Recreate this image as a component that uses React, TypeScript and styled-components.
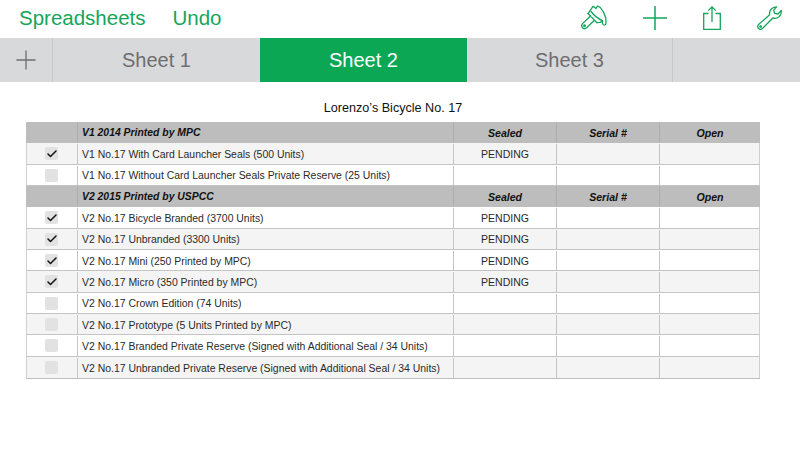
import React from "react";
import styled, { createGlobalStyle } from "styled-components";
import { Check } from "lucide-react";

const GREEN = "#16a55a";

const GlobalStyle = createGlobalStyle`
  html, body {
    margin: 0;
    padding: 0;
    background: #ffffff;
  }
  body {
    width: 800px;
    height: 450px;
    overflow: hidden;
    font-family: "Liberation Sans", Arial, sans-serif;
  }
`;

type Row = { name: string; checked: boolean; sealed?: string };

const section1: Row[] = [
  { name: "V1 No.17 With Card Launcher Seals (500 Units)", checked: true, sealed: "PENDING" },
  { name: "V1 No.17 Without Card Launcher Seals Private Reserve (25 Units)", checked: false },
];

const section2: Row[] = [
  { name: "V2 No.17 Bicycle Branded (3700 Units)", checked: true, sealed: "PENDING" },
  { name: "V2 No.17 Unbranded (3300 Units)", checked: true, sealed: "PENDING" },
  { name: "V2 No.17 Mini (250 Printed by MPC)", checked: true, sealed: "PENDING" },
  { name: "V2 No.17 Micro (350 Printed by MPC)", checked: true, sealed: "PENDING" },
  { name: "V2 No.17 Crown Edition (74 Units)", checked: false },
  { name: "V2 No.17 Prototype (5 Units Printed by MPC)", checked: false },
  { name: "V2 No.17 Branded Private Reserve (Signed with Additional Seal / 34 Units)", checked: false },
  { name: "V2 No.17 Unbranded Private Reserve (Signed with Additional Seal / 34 Units)", checked: false },
];

const BrushIcon = () => (
  <svg width="26" height="25" viewBox="0 0 26 25" fill="none" stroke={GREEN} strokeWidth="1.3" strokeLinejoin="round" strokeLinecap="round">
    {/* handle */}
    <path d="M9.5 11 L1.6 18.6 C0.4 19.8 0.6 21.6 1.6 22.7 C2.8 23.9 4.4 23.9 5.6 22.8 L13.5 15.2" />
    <circle cx="3.5" cy="20.8" r="0.8" />
    {/* ferrule */}
    <path d="M7 8.6 L15.8 17.6 L13.5 15.2 M7 8.6 L9.5 11" />
    {/* bristles and drip */}
    <path d="M7 8.6 L12.2 1.2 L15 3.5 L16.4 1 L19.2 2.4 C21.6 5 23.8 9 24.8 13 L25 18.5 C24.8 20.6 22 20.6 21.6 18.5 L21.4 15.6 L19.4 17.4 L15.8 17.6" />
    <path d="M10 6.5 C13 10.5 17 13.6 21.4 15.6" />
  </svg>
);

const PlusIcon = () => (
  <svg width="24" height="24" viewBox="0 0 24 24" stroke={GREEN} strokeWidth="1.5">
    <path d="M12 0 V24 M0 12 H24" />
  </svg>
);

const ShareIcon = () => (
  <svg width="18" height="24" viewBox="0 0 18 24" fill="none" stroke={GREEN} strokeWidth="1.3">
    <path d="M5.5 7.5 H0.7 V23.3 H17.3 V7.5 H12.5" />
    <path d="M9 16 V1 M5.2 4.6 L9 0.9 L12.8 4.6" />
  </svg>
);

const WrenchIcon = () => (
  <svg width="25" height="24" viewBox="0 0 25 24" fill="none" stroke={GREEN} strokeWidth="1.3" strokeLinejoin="round">
    <path d="M1.5 18.6 L12.6 8.8 C12 4.6 14.8 0.8 19.6 0.8 L16.6 4.4 L17.6 7.4 L21 8 L24.2 4.4 C25 9.4 21 13.4 15.8 12 L5.4 22.6 C4.3 23.6 2.8 23.6 1.7 22.6 C0.6 21.5 0.5 19.7 1.5 18.6 Z" />
    <circle cx="3.6" cy="20.6" r="0.8" />
  </svg>
);

const App: React.FC = () => {
  const renderRows = (rows: Row[], startIndex: number) =>
    rows.map((row, i) => (
      <TableRow key={row.name} $shaded={(startIndex + i) % 2 === 0}>
        <CheckCell>
          <CheckBox>{row.checked && <Check size={12} strokeWidth={3} color="#111" />}</CheckBox>
        </CheckCell>
        <NameCell>{row.name}</NameCell>
        <ValueCell>{row.sealed}</ValueCell>
        <ValueCell />
        <ValueCell />
      </TableRow>
    ));

  const renderHeader = (title: string) => (
    <HeaderRow>
      <HeaderCell />
      <HeaderTitle>{title}</HeaderTitle>
      <HeaderCell>Sealed</HeaderCell>
      <HeaderCell>Serial #</HeaderCell>
      <HeaderCell>Open</HeaderCell>
    </HeaderRow>
  );

  return (
    <>
      <GlobalStyle />
      <Page>
        <Toolbar>
          <ToolbarLinks>
            <ToolbarLink>Spreadsheets</ToolbarLink>
            <ToolbarLink>Undo</ToolbarLink>
          </ToolbarLinks>
          <ToolbarIcons>
            <BrushIcon />
            <PlusIcon />
            <ShareIcon />
            <WrenchIcon />
          </ToolbarIcons>
        </Toolbar>
        <TabBar>
          <AddTab>
            <svg width="20" height="20" viewBox="0 0 20 20" stroke="#6d6e70" strokeWidth="1.3">
              <path d="M10 0.5 V19.5 M0.5 10 H19.5" />
            </svg>
          </AddTab>
          <Tab>Sheet 1</Tab>
          <Tab $active>Sheet 2</Tab>
          <Tab>Sheet 3</Tab>
          <EmptyTab />
        </TabBar>
        <Title>Lorenzo’s Bicycle No. 17</Title>
        <Table>
          {renderHeader("V1 2014 Printed by MPC")}
          {renderRows(section1, 0)}
          {renderHeader("V2 2015 Printed by USPCC")}
          {renderRows(section2, 1)}
        </Table>
      </Page>
    </>
  );
};

const Page = styled.div`
  width: 800px;
  height: 450px;
  background: #ffffff;
`;

const Toolbar = styled.div`
  height: 38px;
  display: flex;
  align-items: center;
  justify-content: space-between;
  box-sizing: border-box;
  padding: 0 18px 0 19px;
`;

const ToolbarLinks = styled.div`
  display: flex;
  gap: 27px;
  margin-top: -2px;
`;

const ToolbarLink = styled.div`
  font-size: 20.5px;
  color: ${GREEN};
`;

const ToolbarIcons = styled.div`
  align-self: stretch;
  display: flex;
  align-items: flex-end;
  gap: 36px;
  padding-bottom: 8px;
`;

const TabBar = styled.div`
  height: 44px;
  display: grid;
  grid-template-columns: 53px 207px 207px 205px 1fr;
  background: #d8d9db;
`;

const AddTab = styled.div`
  display: flex;
  align-items: center;
  justify-content: center;
  border-right: 1px solid #c8c9cb;
`;

const Tab = styled.div<{ $active?: boolean }>`
  display: flex;
  align-items: center;
  justify-content: center;
  font-size: 20px;
  color: ${(p) => (p.$active ? "#ffffff" : "#6d6e70")};
  background: ${(p) => (p.$active ? "#0ba755" : "transparent")};
`;

const EmptyTab = styled.div`
  border-left: 1px solid #c8c9cb;
`;

const Title = styled.div`
  margin-top: 18px;
  width: 786px;
  height: 22px;
  line-height: 16px;
  text-align: center;
  font-size: 12.6px;
  color: #111111;
`;

const Table = styled.div`
  margin-left: 26px;
  width: 734px;
  display: grid;
  grid-auto-rows: 21.33px;
  border-bottom: 1px solid #bdbdbd;
`;

const HeaderRow = styled.div`
  display: grid;
  grid-template-columns: 51px 376px 103px 103px 1fr;
  background: #bdbdbd;
`;

const HeaderCell = styled.div`
  display: flex;
  align-items: center;
  justify-content: center;
  font-size: 10.6px;
  font-weight: bold;
  font-style: italic;
  color: #111111;
  box-sizing: border-box;
  border-left: 1px solid #aeaeae;
  &:first-child {
    border-left: none;
  }
`;

const HeaderTitle = styled(HeaderCell)`
  justify-content: flex-start;
  padding-left: 4px;
  font-size: 10.4px;
`;

const TableRow = styled.div<{ $shaded: boolean }>`
  display: grid;
  grid-template-columns: 50px 376px 103px 103px 1fr;
  box-sizing: border-box;
  padding-top: 1px;
  background: ${(p) => (p.$shaded ? "#f4f4f4" : "#ffffff")};
  border-bottom: 1px solid #c4c4c4;
  border-left: 1px solid #d0d0d0;
  border-right: 1px solid #d0d0d0;
  &:last-child {
    border-bottom: none;
  }
`;

const CheckCell = styled.div`
  display: flex;
  align-items: center;
  justify-content: center;
  padding-right: 1px;
`;

const CheckBox = styled.div`
  width: 13px;
  height: 13px;
  border-radius: 2px;
  background: #e2e2e2;
  display: flex;
  align-items: center;
  justify-content: center;
`;

const NameCell = styled.div`
  display: flex;
  align-items: center;
  padding: 1px 0 0 4px;
  font-size: 10.45px;
  color: #2a2a2a;
  white-space: nowrap;
  border-left: 1px solid #c4c4c4;
`;

const ValueCell = styled.div`
  display: flex;
  align-items: center;
  justify-content: center;
  font-size: 10.5px;
  color: #2a2a2a;
  box-sizing: border-box;
  border-left: 1px solid #c4c4c4;
`;

export default App;
